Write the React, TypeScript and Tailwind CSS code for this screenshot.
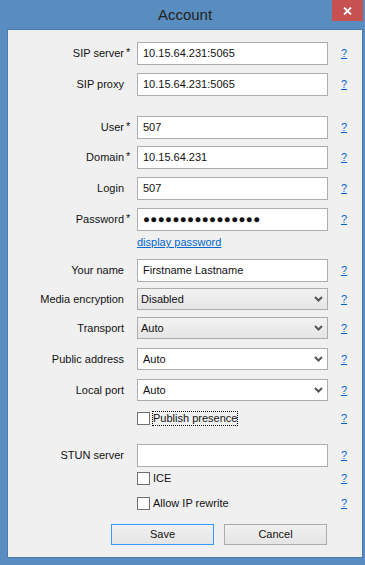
import React from "react";

const Help = () => (
  <a className="text-[#0066cc] underline text-[11px] leading-none cursor-pointer">?</a>
);

function Row({
  mt,
  label,
  req,
  children,
}: {
  mt: string;
  label?: string;
  req?: boolean;
  children: React.ReactNode;
}) {
  return (
    <div className={`flex items-center ${mt}`}>
      <div className="w-[116px] text-right whitespace-nowrap">{label}</div>
      <div className="w-[13px] pl-[2px] relative top-[-1px]">{req ? "*" : ""}</div>
      <div className="w-[191px]">{children}</div>
      <div className="ml-[13px] flex items-center">
        <Help />
      </div>
    </div>
  );
}

const Input = ({ value, cls = "" }: { value?: string; cls?: string }) => (
  <div className="h-[23px] border border-[#abadb3] bg-white pl-[5px] flex items-center whitespace-nowrap">
    <span className={cls}>{value}</span>
  </div>
);

const Chevron = () => (
  <svg width="9" height="6" viewBox="0 0 9 6" className="mr-[4px]">
    <path d="M1 1 L4.5 4.5 L8 1" stroke="#555" strokeWidth="2" fill="none" />
  </svg>
);

const Select = ({ value, editable }: { value: string; editable?: boolean }) =>
  editable ? (
    <div className="h-[22px] border border-[#abadb3] bg-white pl-[5px] flex items-center justify-between">
      <span>{value}</span>
      <Chevron />
    </div>
  ) : (
    <div className="h-[22px] border border-[#acacac] bg-gradient-to-b from-[#f2f2f2] to-[#e5e5e5] pl-[3px] flex items-center justify-between">
      <span>{value}</span>
      <Chevron />
    </div>
  );

const Check = ({ label, focus }: { label: string; focus?: boolean }) => (
  <div className="flex items-center h-[13px]">
    <div className="w-[13px] h-[13px] border border-[#707070] bg-white shrink-0" />
    <span
      className={
        focus
          ? "ml-[2px] border border-dotted border-black leading-[13px]"
          : "ml-[3px] leading-[13px]"
      }
    >
      {label}
    </span>
  </div>
);

export default function App() {
  return (
    <div className="w-[365px] h-[565px] bg-[#5a8dbf] font-['Liberation_Sans',Arial,sans-serif] text-[11px] text-[#111] flex flex-col">
      <div className="h-[30px] relative flex items-center justify-center">
        <span className="text-[15px] text-[#222] pl-[5px] pt-[1px]">Account</span>
        <div className="absolute right-[2px] top-0 w-[31px] h-[21px] bg-[#c75050] flex items-center justify-center">
          <svg width="9" height="8" viewBox="0 0 9 8">
            <path d="M1 0.5 L8 7.5 M8 0.5 L1 7.5" stroke="#fff" strokeWidth="1.8" />
          </svg>
        </div>
      </div>
      <div className="mx-[8px] w-[354px] h-[527px] bg-[#f0f0f0] flex flex-col outline outline-1 outline-[#4a7aab]">
        <Row mt="mt-[12px]" label="SIP server" req>
          <Input value="10.15.64.231:5065" />
        </Row>
        <Row mt="mt-[8px]" label="SIP proxy">
          <Input value="10.15.64.231:5065" />
        </Row>
        <Row mt="mt-[20px]" label="User" req>
          <Input value="507" />
        </Row>
        <Row mt="mt-[7px]" label="Domain" req>
          <Input value="10.15.64.231" />
        </Row>
        <Row mt="mt-[8px]" label="Login">
          <Input value="507" />
        </Row>
        <Row mt="mt-[8px]" label="Password" req>
          <Input value="●●●●●●●●●●●●●●●●" cls="tracking-[0.4px] text-[11.5px]" />
        </Row>
        <div className="mt-[5px] ml-[129px] h-[13px] leading-[13px]">
          <a className="text-[#0066cc] underline">display password</a>
        </div>
        <Row mt="mt-[10px]" label="Your name">
          <Input value="Firstname Lastname" />
        </Row>
        <Row mt="mt-[6px]" label="Media encryption">
          <Select value="Disabled" />
        </Row>
        <Row mt="mt-[7px]" label="Transport">
          <Select value="Auto" />
        </Row>
        <Row mt="mt-[9px]" label="Public address">
          <Select value="Auto" editable />
        </Row>
        <Row mt="mt-[9px]" label="Local port">
          <Select value="Auto" editable />
        </Row>
        <Row mt="mt-[11px]">
          <Check label="Publish presence" focus />
        </Row>
        <Row mt="mt-[19px]" label="STUN server">
          <Input />
        </Row>
        <Row mt="mt-[5px]">
          <Check label="ICE" />
        </Row>
        <Row mt="mt-[12px]">
          <Check label="Allow IP rewrite" />
        </Row>
        <div className="mt-[14px] ml-[103px] flex gap-[10px]">
          <div className="w-[103px] h-[21px] border border-[#3399ff] bg-gradient-to-b from-[#f0f0f0] to-[#e5e5e5] flex items-center justify-center">
            Save
          </div>
          <div className="w-[103px] h-[21px] border border-[#acacac] bg-gradient-to-b from-[#f0f0f0] to-[#e5e5e5] flex items-center justify-center">
            Cancel
          </div>
        </div>
      </div>
    </div>
  );
}
